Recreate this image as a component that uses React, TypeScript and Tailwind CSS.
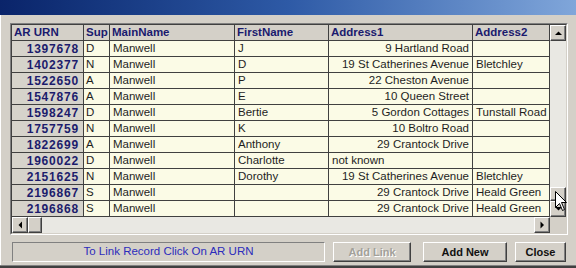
import React from "react";

type Row = [string, string, string, string, string, string, boolean?];

const rows: Row[] = [
  ["1397678", "D", "Manwell", "J", "9 Hartland Road", ""],
  ["1402377", "N", "Manwell", "D", "19 St Catherines Avenue", "Bletchley"],
  ["1522650", "A", "Manwell", "P", "22 Cheston Avenue", ""],
  ["1547876", "A", "Manwell", "E", "10 Queen Street", ""],
  ["1598247", "D", "Manwell", "Bertie", "5 Gordon Cottages", "Tunstall Road"],
  ["1757759", "N", "Manwell", "K", "10 Boltro Road", ""],
  ["1822699", "A", "Manwell", "Anthony", "29 Crantock Drive", ""],
  ["1960022", "D", "Manwell", "Charlotte", "not known", "", true],
  ["2151625", "N", "Manwell", "Dorothy", "19 St Catherines Avenue", "Bletchley"],
  ["2196867", "S", "Manwell", "", "29 Crantock Drive", "Heald Green"],
  ["2196868", "S", "Manwell", "", "29 Crantock Drive", "Heald Green"],
];

const raised =
  "border border-t-[#ffffff] border-l-[#ffffff] border-b-[#404040] border-r-[#404040] shadow-[inset_-1px_-1px_0_#808080]";

function Arrow({ dir }: { dir: "up" | "down" | "left" | "right" }) {
  const pts: Record<string, string> = {
    up: "1,5 4.5,1.5 8,5",
    down: "1,1 4.5,4.5 8,1",
    left: "5,0.5 1.5,4 5,7.5",
    right: "1.5,0.5 5,4 1.5,7.5",
  };
  const vertical = dir === "up" || dir === "down";
  return (
    <svg width={vertical ? 9 : 7} height={vertical ? 6 : 8} viewBox={vertical ? "0 0 9 6" : "0 0 7 8"}>
      <polygon points={pts[dir]} fill="#000" />
    </svg>
  );
}

function SBtn({ dir, className = "" }: { dir: "up" | "down" | "left" | "right"; className?: string }) {
  return (
    <div className={`w-[16px] h-[16px] bg-[#d4d0c8] flex items-center justify-center shrink-0 ${raised} ${className}`}>
      <Arrow dir={dir} />
    </div>
  );
}

export default function App() {
  return (
    <div className="relative w-[576px] h-[268px] overflow-hidden bg-[#d4d0c8] flex flex-col border-b-2 border-b-[#404040] shadow-[inset_1px_0_0_#ffffff] font-['Liberation_Sans',Arial,sans-serif]">
      {/* title bar */}
      <div className="h-[15px] shrink-0 bg-gradient-to-r from-[#0a246a] via-[#2e5aa6] to-[#80a6da]" />

      {/* grid */}
      <div className="ml-[10px] mt-[8px] w-[558px] h-[212px] shrink-0 border border-t-[#808080] border-l-[#808080] border-b-[#ffffff] border-r-[#ffffff]">
        <div className="w-full h-full border border-t-[#404040] border-l-[#404040] border-b-[#d4d0c8] border-r-[#d4d0c8] flex flex-col">
          <div className="flex h-[192px]">
            <div className="w-[538px] flex flex-col text-[11.5px] leading-none">
              {/* header */}
              <div className="flex h-[16px] border-b border-[#404040] bg-[#d4d0c8] font-bold text-[#1a1a6e]">
                <div className="w-[72px] border-r border-[#404040] pl-[2px] flex items-center whitespace-nowrap">AR URN</div>
                <div className="w-[26px] border-r border-[#404040] pl-[2px] flex items-center whitespace-nowrap">Sup</div>
                <div className="w-[125px] border-r border-[#404040] pl-[2px] flex items-center whitespace-nowrap">MainName</div>
                <div className="w-[94px] border-r border-[#404040] pl-[2px] flex items-center whitespace-nowrap">FirstName</div>
                <div className="w-[144px] border-r border-[#404040] pl-[2px] flex items-center whitespace-nowrap">Address1</div>
                <div className="w-[77px] border-r border-[#404040] pl-[2px] flex items-center whitespace-nowrap">Address2</div>
              </div>
              {rows.map((r, i) => (
                <div key={i} className="flex h-[16px] border-b border-[#404040] text-[#1e1e1e]">
                  <div className="w-[72px] border-r border-[#404040] bg-[#d6d3cb] pr-[4px] flex items-center justify-end font-bold text-[12px] tracking-[0.8px] text-[#1c1c6c]">
                    {r[0]}
                  </div>
                  <div className="w-[26px] border-r border-[#404040] bg-[#fbfbe6] pl-[2px] flex items-center overflow-hidden whitespace-nowrap">{r[1]}</div>
                  <div className="w-[125px] border-r border-[#404040] bg-[#fbfbe6] pl-[3px] flex items-center overflow-hidden whitespace-nowrap">{r[2]}</div>
                  <div className="w-[94px] border-r border-[#404040] bg-[#fbfbe6] pl-[3px] flex items-center overflow-hidden whitespace-nowrap">{r[3]}</div>
                  <div
                    className={`w-[144px] border-r border-[#404040] bg-[#fbfbe6] flex items-center overflow-hidden whitespace-nowrap ${
                      r[6] ? "pl-[3px] justify-start" : "pr-[3px] justify-end"
                    }`}
                  >
                    {r[4]}
                  </div>
                  <div className="w-[77px] border-r border-[#404040] bg-[#fbfbe6] pl-[3px] flex items-center overflow-hidden whitespace-nowrap">{r[5]}</div>
                </div>
              ))}
            </div>
            {/* vertical scrollbar */}
            <div className="w-[16px] flex flex-col bg-[#e9e8e3]">
              <SBtn dir="up" />
              <div className="flex-1" />
              <div className={`w-[16px] h-[14px] bg-[#d4d0c8] ${raised}`} />
              <SBtn dir="down" />
            </div>
          </div>
          {/* horizontal scrollbar */}
          <div className="flex h-[16px]">
            <div className="w-[538px] flex bg-[#e9e8e3]">
              <SBtn dir="left" />
              <div className={`w-[14px] h-[16px] bg-[#d4d0c8] ${raised}`} />
              <div className="flex-1" />
              <SBtn dir="right" />
            </div>
            <div className="w-[16px] bg-[#d4d0c8]" />
          </div>
        </div>
      </div>

      {/* bottom bar */}
      <div className="flex mt-[7px] h-[20px] shrink-0">
        <div className="ml-[12px] w-[313px] h-[20px] border border-t-[#808080] border-l-[#808080] border-b-[#ffffff] border-r-[#ffffff] flex items-center justify-center text-[11.5px] text-[#2c2cbc] whitespace-nowrap">
          To Link Record Click On AR URN
        </div>
        <div className={`ml-[8px] w-[78px] h-[20px] bg-[#d4d0c8] flex items-center justify-center text-[11px] font-bold text-[#a3a19a] [text-shadow:1px_1px_0_#ffffff] ${raised}`}>
          Add Link
        </div>
        <div className={`ml-[12px] w-[84px] h-[20px] bg-[#d4d0c8] flex items-center justify-center text-[11px] font-bold text-[#111] ${raised}`}>
          Add New
        </div>
        <div className={`ml-[8px] w-[51px] h-[20px] bg-[#d4d0c8] flex items-center justify-center text-[11px] font-bold text-[#111] ${raised}`}>
          Close
        </div>
      </div>
      <div className="flex-1" />
      <div className="h-[1px] bg-[#808080] shrink-0" />

      {/* mouse cursor */}
      <svg className="absolute left-[555px] top-[191px]" width="13" height="21" viewBox="0 0 13 21">
        <path d="M0.5,0.5 L0.5,16.5 L4.5,12.5 L7.5,19.5 L9.5,18.5 L6.5,11.5 L11.5,11.5 Z" fill="#ffffff" stroke="#000" strokeWidth="1" />
      </svg>
    </div>
  );
}
